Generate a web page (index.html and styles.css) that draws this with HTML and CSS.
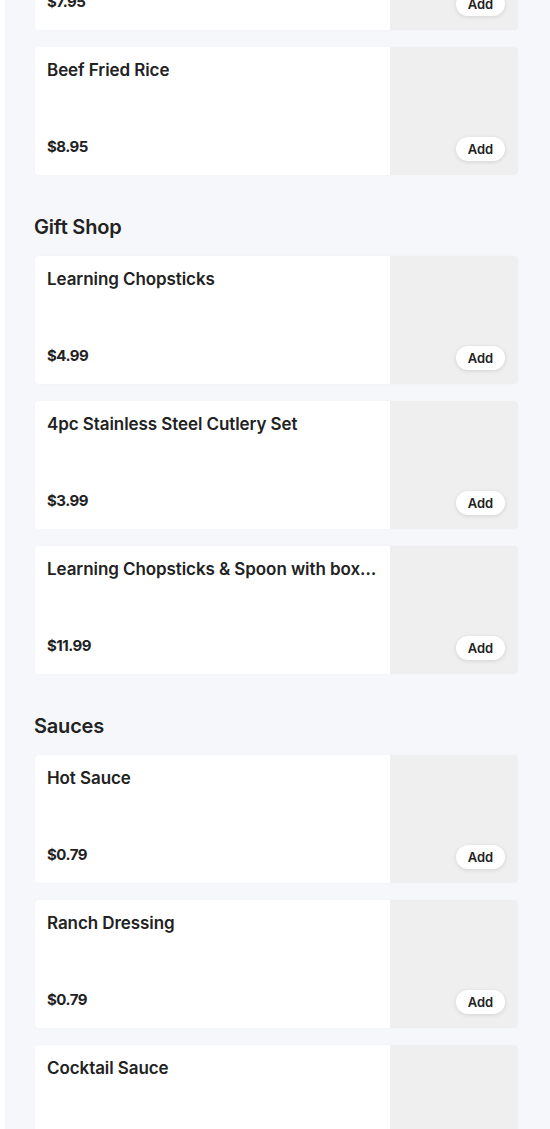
FILE: index.html
```html
<!doctype html>
<html>
<head>
<meta charset="utf-8">
<title>Menu</title>
<link rel="stylesheet" href="styles.css">
</head>
<body>
<div class="menu">
	<div class="section">
		<div class="item">
			<div class="info">
				<div class="name">Chicken Fried Rice</div>
				<div class="price">$7.95</div>
			</div>
			<div class="pic"><span class="add">Add</span></div>
		</div>
		<div class="item">
			<div class="info">
				<div class="name">Beef Fried Rice</div>
				<div class="price">$8.95</div>
			</div>
			<div class="pic"><span class="add">Add</span></div>
		</div>
	</div>

	<div class="section">
		<h2 class="title">Gift Shop</h2>
		<div class="item">
			<div class="info">
				<div class="name">Learning Chopsticks</div>
				<div class="price">$4.99</div>
			</div>
			<div class="pic"><span class="add">Add</span></div>
		</div>
		<div class="item">
			<div class="info">
				<div class="name">4pc Stainless Steel Cutlery Set</div>
				<div class="price">$3.99</div>
			</div>
			<div class="pic"><span class="add">Add</span></div>
		</div>
		<div class="item">
			<div class="info">
				<div class="name">Learning Chopsticks &amp; Spoon with box set</div>
				<div class="price">$11.99</div>
			</div>
			<div class="pic"><span class="add">Add</span></div>
		</div>
	</div>

	<div class="section">
		<h2 class="title">Sauces</h2>
		<div class="item">
			<div class="info">
				<div class="name">Hot Sauce</div>
				<div class="price">$0.79</div>
			</div>
			<div class="pic"><span class="add">Add</span></div>
		</div>
		<div class="item">
			<div class="info">
				<div class="name">Ranch Dressing</div>
				<div class="price">$0.79</div>
			</div>
			<div class="pic"><span class="add">Add</span></div>
		</div>
		<div class="item">
			<div class="info">
				<div class="name">Cocktail Sauce</div>
				<div class="price">$0.79</div>
			</div>
			<div class="pic"><span class="add">Add</span></div>
		</div>
	</div>
</div>
</body>
</html>
```

FILE: styles.css
```css
*{
	padding: 0;
	margin: 0;
	box-sizing: border-box;
}
body{
	background: #fff;
	font-family: Inter, "Liberation Sans", sans-serif;
	color: #222;
	overflow: hidden;
}
.menu{
	margin-left: 5px;
	margin-top: -98px;
	padding: 0 32px 40px 30px;
	background: #f6f7fb;
}
.section{
	display: flex;
	flex-direction: column;
	gap: 17px;
	padding-top: 38px;
}
.section:first-child{
	padding-top: 0;
}
.title{
	font-size: 20px;
	font-weight: 600;
	line-height: 28px;
	letter-spacing: -0.2px;
	margin-bottom: -2px;
	margin-left: -1px;
	color: #222;
}
.item{
	display: flex;
	height: 128px;
	background: #fff;
	border-radius: 4px;
	overflow: hidden;
	box-shadow: 0 0 2px rgba(0,0,0,0.03);
}
.info{
	flex: 1;
	min-width: 0;
	display: flex;
	flex-direction: column;
	justify-content: space-between;
	padding: 12px 12px 19px;
}
.name{
	font-size: 17px;
	font-weight: 600;
	line-height: 22px;
	letter-spacing: -0.08px;
	white-space: nowrap;
	overflow: hidden;
	text-overflow: ellipsis;
}
.price{
	font-size: 15px;
	font-weight: 700;
	line-height: 18px;
	letter-spacing: -0.5px;
}
.pic{
	width: 128px;
	background: #efefef;
	display: flex;
	align-items: flex-end;
	justify-content: flex-end;
	padding: 0 13px 14px 0;
}
.add{
	display: block;
	width: 49px;
	height: 24px;
	line-height: 24px;
	text-align: center;
	font-size: 13px;
	font-weight: 600;
	background: #fff;
	border-radius: 12px;
	box-shadow: 0 1px 4px rgba(0,0,0,0.12);
}
```
